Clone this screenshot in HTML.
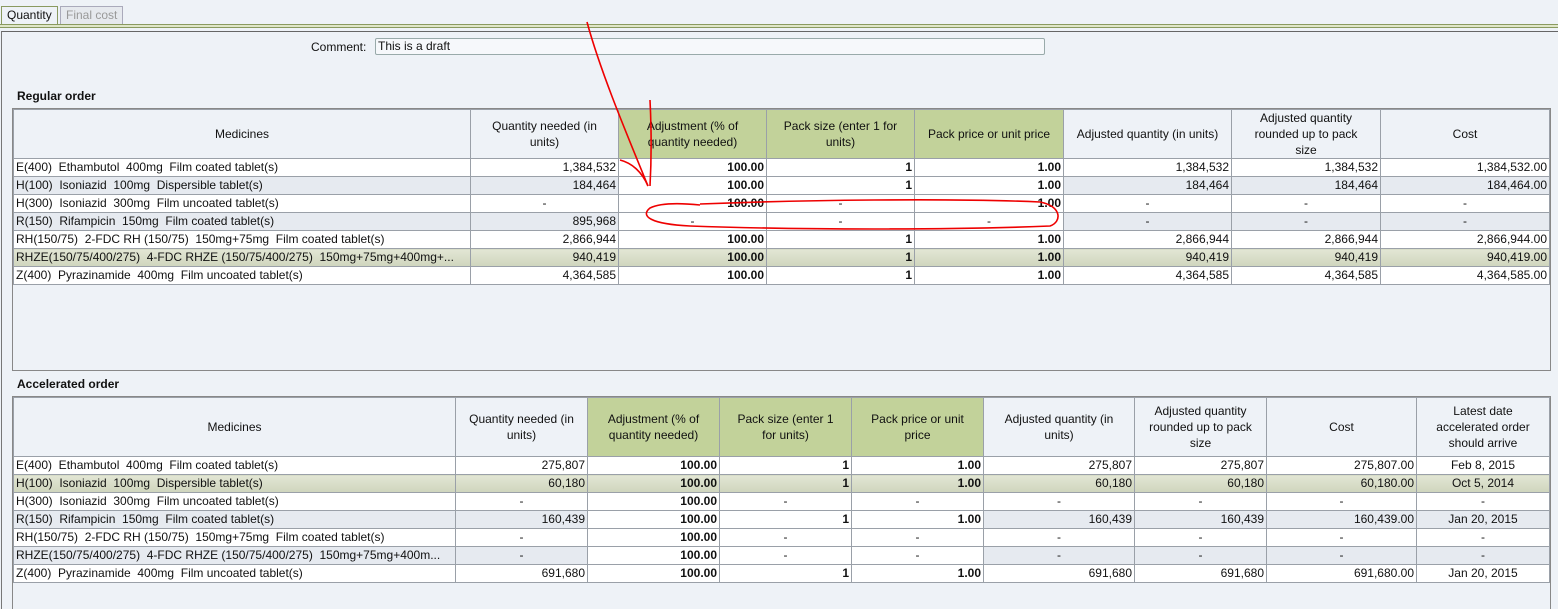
<!DOCTYPE html>
<html><head><meta charset="utf-8"><style>
html,body{margin:0;width:1558px;height:609px;overflow:hidden}
body{background:#eef2f7;font-family:"Liberation Sans",Arial,sans-serif;font-size:12px;color:#111;position:relative}
.tab{position:absolute;top:6px;height:17px;border:1px solid #aab;border-bottom:none;line-height:17px;padding:0 5px;font-size:12px}
.frame{position:absolute;left:1px;top:31px;width:1556px;height:590px;border-left:1px solid #777;border-top:1px solid #666}
table{position:absolute;border-collapse:collapse;table-layout:fixed;background:#eef2f7}
td{border:1px solid #9aa0a8;height:17px;padding:0 2px;white-space:nowrap;overflow:hidden;font-size:12px;line-height:17px}
th{border:1px solid #9aa0a8;font-weight:normal;font-size:12px;line-height:16px;padding:0 4px;background:#eef2f7}
th.p{padding:0 14px}th.q{padding:0 22px}
th.g{background:#c2d29a}
td.r{text-align:right}td.c{text-align:center}
td.e{background:#fff;font-weight:bold;text-align:right}
tr.a td{background:#fff}tr.b td{background:#e6eaf0}
tr.b td.e,tr.a td.e{background:#fff}
tr.s td{background:linear-gradient(#e2e6d4,#cfd5bd)}
.box{position:absolute;border:1px solid #888}
.h{position:absolute;font-weight:bold;font-size:12px}
</style></head><body>
<div class="tab" style="left:1px;background:#eef2f7;border-color:#8a9a60">Quantity</div>
<div class="tab" style="left:60px;color:#999;background:#e6e9ee">Final cost</div>
<div style="position:absolute;left:0;top:24px;width:1558px;height:2px;border-top:1px solid #8a9a60;border-bottom:1px solid #8a9a60;background:#dfe6c8"></div>
<div class="frame"></div>
<div style="position:absolute;left:311px;top:40px">Comment:</div>
<div style="position:absolute;left:375px;top:38px;width:666px;height:15px;border:1px solid #9aa;border-radius:2px;background:#f6f8fb;padding-left:2px;line-height:15px">This is a draft</div>
<div class="h" style="left:17px;top:89px">Regular order</div>
<div class="box" style="left:12px;top:108px;width:1537px;height:261px"></div>
<table style="left:13px;top:109px;width:1536px">
<colgroup><col style="width:457px"><col style="width:148px"><col style="width:148px"><col style="width:148px"><col style="width:149px"><col style="width:168px"><col style="width:149px"><col style="width:169px"></colgroup>
<tr style="height:43px"><th>Medicines</th><th class="p">Quantity needed (in units)</th><th class="g p">Adjustment (% of quantity needed)</th><th class="g p">Pack size (enter 1 for units)</th><th class="g">Pack price or unit price</th><th>Adjusted quantity (in units)</th><th class="p">Adjusted quantity rounded up to pack size</th><th>Cost</th></tr>
<tr class="a"><td>E(400)&nbsp; Ethambutol&nbsp; 400mg&nbsp; Film coated tablet(s)</td><td class="r">1,384,532</td><td class="e">100.00</td><td class="e">1</td><td class="e">1.00</td><td class="r">1,384,532</td><td class="r">1,384,532</td><td class="r">1,384,532.00</td></tr>
<tr class="b"><td>H(100)&nbsp; Isoniazid&nbsp; 100mg&nbsp; Dispersible tablet(s)</td><td class="r">184,464</td><td class="e">100.00</td><td class="e">1</td><td class="e">1.00</td><td class="r">184,464</td><td class="r">184,464</td><td class="r">184,464.00</td></tr>
<tr class="a"><td>H(300)&nbsp; Isoniazid&nbsp; 300mg&nbsp; Film uncoated tablet(s)</td><td class="c">-</td><td class="e">100.00</td><td class="c" style="background:#fff">-</td><td class="e">1.00</td><td class="c">-</td><td class="c">-</td><td class="c">-</td></tr>
<tr class="b"><td>R(150)&nbsp; Rifampicin&nbsp; 150mg&nbsp; Film coated tablet(s)</td><td class="r">895,968</td><td class="c" style="background:#fff">-</td><td class="c" style="background:#fff">-</td><td class="c" style="background:#fff">-</td><td class="c">-</td><td class="c">-</td><td class="c">-</td></tr>
<tr class="a"><td>RH(150/75)&nbsp; 2-FDC RH (150/75)&nbsp; 150mg+75mg&nbsp; Film coated tablet(s)</td><td class="r">2,866,944</td><td class="e">100.00</td><td class="e">1</td><td class="e">1.00</td><td class="r">2,866,944</td><td class="r">2,866,944</td><td class="r">2,866,944.00</td></tr>
<tr class="s"><td>RHZE(150/75/400/275)&nbsp; 4-FDC RHZE (150/75/400/275)&nbsp; 150mg+75mg+400mg+...</td><td class="r">940,419</td><td class="r" style="font-weight:bold">100.00</td><td class="r" style="font-weight:bold">1</td><td class="r" style="font-weight:bold">1.00</td><td class="r">940,419</td><td class="r">940,419</td><td class="r">940,419.00</td></tr>
<tr class="a"><td>Z(400)&nbsp; Pyrazinamide&nbsp; 400mg&nbsp; Film uncoated tablet(s)</td><td class="r">4,364,585</td><td class="e">100.00</td><td class="e">1</td><td class="e">1.00</td><td class="r">4,364,585</td><td class="r">4,364,585</td><td class="r">4,364,585.00</td></tr>
</table>
<div class="h" style="left:17px;top:377px">Accelerated order</div>
<div class="box" style="left:12px;top:396px;width:1537px;height:220px"></div>
<table style="left:13px;top:397px;width:1536px">
<colgroup><col style="width:442px"><col style="width:132px"><col style="width:132px"><col style="width:132px"><col style="width:132px"><col style="width:151px"><col style="width:132px"><col style="width:150px"><col style="width:133px"></colgroup>
<tr style="height:59px"><th>Medicines</th><th>Quantity needed (in units)</th><th class="g">Adjustment (% of quantity needed)</th><th class="g p">Pack size (enter 1 for units)</th><th class="g p">Pack price or unit price</th><th class="p">Adjusted quantity (in units)</th><th>Adjusted quantity rounded up to pack size</th><th>Cost</th><th>Latest date accelerated order should arrive</th></tr>
<tr class="a"><td>E(400)&nbsp; Ethambutol&nbsp; 400mg&nbsp; Film coated tablet(s)</td><td class="r">275,807</td><td class="e">100.00</td><td class="e">1</td><td class="e">1.00</td><td class="r">275,807</td><td class="r">275,807</td><td class="r">275,807.00</td><td class="c">Feb 8, 2015</td></tr>
<tr class="s"><td>H(100)&nbsp; Isoniazid&nbsp; 100mg&nbsp; Dispersible tablet(s)</td><td class="r">60,180</td><td class="r" style="font-weight:bold">100.00</td><td class="r" style="font-weight:bold">1</td><td class="r" style="font-weight:bold">1.00</td><td class="r">60,180</td><td class="r">60,180</td><td class="r">60,180.00</td><td class="c">Oct 5, 2014</td></tr>
<tr class="a"><td>H(300)&nbsp; Isoniazid&nbsp; 300mg&nbsp; Film uncoated tablet(s)</td><td class="c">-</td><td class="e">100.00</td><td class="c" style="background:#fff">-</td><td class="c" style="background:#fff">-</td><td class="c">-</td><td class="c">-</td><td class="c">-</td><td class="c">-</td></tr>
<tr class="b"><td>R(150)&nbsp; Rifampicin&nbsp; 150mg&nbsp; Film coated tablet(s)</td><td class="r">160,439</td><td class="e">100.00</td><td class="e">1</td><td class="e">1.00</td><td class="r">160,439</td><td class="r">160,439</td><td class="r">160,439.00</td><td class="c">Jan 20, 2015</td></tr>
<tr class="a"><td>RH(150/75)&nbsp; 2-FDC RH (150/75)&nbsp; 150mg+75mg&nbsp; Film coated tablet(s)</td><td class="c">-</td><td class="e">100.00</td><td class="c" style="background:#fff">-</td><td class="c" style="background:#fff">-</td><td class="c">-</td><td class="c">-</td><td class="c">-</td><td class="c">-</td></tr>
<tr class="b"><td>RHZE(150/75/400/275)&nbsp; 4-FDC RHZE (150/75/400/275)&nbsp; 150mg+75mg+400m...</td><td class="c">-</td><td class="e">100.00</td><td class="c" style="background:#fff">-</td><td class="c" style="background:#fff">-</td><td class="c">-</td><td class="c">-</td><td class="c">-</td><td class="c">-</td></tr>
<tr class="a"><td>Z(400)&nbsp; Pyrazinamide&nbsp; 400mg&nbsp; Film uncoated tablet(s)</td><td class="r">691,680</td><td class="e">100.00</td><td class="e">1</td><td class="e">1.00</td><td class="r">691,680</td><td class="r">691,680</td><td class="r">691,680.00</td><td class="c">Jan 20, 2015</td></tr>
</table>
<svg style="position:absolute;left:0;top:0" width="1558" height="609" fill="none" stroke="#e00" stroke-width="1.6">
<path d="M587 22 C600 70 625 130 648 186"/>
<path d="M650 186 C652 150 651 120 650 100"/>
<path d="M620 160 C632 163 642 172 648 186"/>
<path d="M700 204 C800 200 950 198 1040 202 C1062 206 1062 222 1050 226 C950 230 800 230 690 226 C650 224 640 216 650 208 C660 203 680 203 700 205"/>
</svg>
</body></html>
